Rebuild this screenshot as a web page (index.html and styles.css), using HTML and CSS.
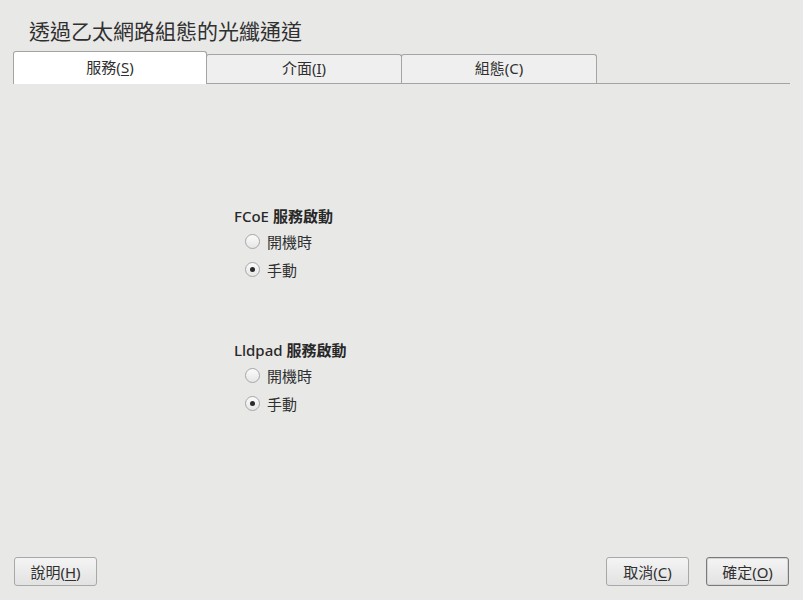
FILE: index.html
```html
<!DOCTYPE html>
<html lang="zh-Hant">
<head>
<meta charset="utf-8">
<title>透過乙太網路組態的光纖通道</title>
<link rel="stylesheet" href="styles.css">
</head>
<body>
<div class="dialog">
  <h1 class="title">透過乙太網路組態的光纖通道</h1>
  <div class="tabbar">
    <div class="tab active">服務(<u>S</u>)</div>
    <div class="tab">介面(<u>I</u>)</div>
    <div class="tab">組態(C)</div>
  </div>
  <div class="content">
    <div class="group">
      <div class="group-label">FCoE <b>服務啟動</b></div>
      <label class="radio-row"><span class="radio"></span>開機時</label>
      <label class="radio-row"><span class="radio checked"></span>手動</label>
    </div>
    <div class="group">
      <div class="group-label">Lldpad <b>服務啟動</b></div>
      <label class="radio-row"><span class="radio"></span>開機時</label>
      <label class="radio-row"><span class="radio checked"></span>手動</label>
    </div>
  </div>
  <div class="footer">
    <button class="btn">說明(<u>H</u>)</button>
    <div class="btn-group">
      <button class="btn">取消(<u>C</u>)</button>
      <button class="btn default">確定(<u>O</u>)</button>
    </div>
  </div>
</div>
</body>
</html>
```

FILE: styles.css
```css
html, body {
  margin: 0;
  padding: 0;
}
body {
  background: #e8e8e7;
  font-family: "Noto Sans", "Noto Sans CJK TC", sans-serif;
  color: #303030;
  width: 803px;
  height: 600px;
  overflow: hidden;
}
.dialog {
  display: flex;
  flex-direction: column;
  height: 600px;
}
.title {
  margin: 0;
  padding: 16px 0 0 29px;
  font-size: 21px;
  font-weight: normal;
  line-height: 30px;
  height: 30px;
  color: #303030;
}
.tabbar {
  display: flex;
  align-items: flex-end;
  margin: 5px 13px 0 13px;
  border-bottom: 1px solid #a4a4a4;
  height: 32px;
}
.tab {
  box-sizing: border-box;
  width: 196px;
  height: 29px;
  margin-left: -1px;
  background: #efefef;
  border: 1px solid #a4a4a4;
  border-bottom: none;
  border-radius: 3px 3px 0 0;
  font-size: 15px;
  line-height: 27px;
  text-align: center;
  color: #303030;
}
.tab:first-child {
  margin-left: 0;
  width: 194px;
}
.tab.active {
  position: relative;
  z-index: 1;
  height: 33px;
  margin-bottom: -1px;
  background: #ffffff;
  line-height: 31px;
}
.tab u, .btn u {
  text-underline-offset: 2px;
}
.content {
  flex: 1;
  padding: 121px 0 0 234px;
}
.group {
  margin-bottom: 56px;
}
.group-label {
  font-size: 15px;
  font-weight: 500;
  line-height: 22px;
  height: 22px;
  color: #282828;
}
.group-label b {
  font-weight: bold;
}
.radio-row {
  display: flex;
  align-items: center;
  height: 28px;
  padding-left: 11px;
  font-size: 15px;
}
.radio {
  box-sizing: border-box;
  width: 15px;
  height: 15px;
  border-radius: 50%;
  border: 1px solid #a6a6a6;
  background: linear-gradient(#fbfbfb, #e6e6e6);
  margin-right: 7px;
  display: flex;
  align-items: center;
  justify-content: center;
}
.radio.checked::after {
  content: "";
  width: 5px;
  height: 5px;
  border-radius: 50%;
  background: #2a2a2a;
}
.footer {
  display: flex;
  justify-content: space-between;
  align-items: flex-end;
  padding: 0 14px 14px 14px;
}
.btn-group {
  display: flex;
  gap: 17px;
}
.btn {
  box-sizing: border-box;
  width: 83px;
  height: 29px;
  padding: 0;
  border: 1px solid #a8a8a8;
  border-radius: 3px;
  background: linear-gradient(#f4f4f4, #e2e2e2);
  font-family: "Noto Sans", "Noto Sans CJK TC", sans-serif;
  font-size: 15px;
  color: #303030;
}
.btn.default {
  border: 1px solid #7a7a7a;
  box-shadow: inset 0 0 0 1px #d4d4d4;
}
```
